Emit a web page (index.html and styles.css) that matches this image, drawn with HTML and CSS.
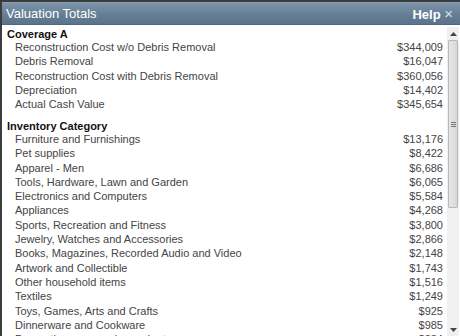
FILE: index.html
```html
<!DOCTYPE html>
<html>
<head>
<meta charset="utf-8">
<link rel="stylesheet" href="styles.css">
</head>
<body>
<div class="dialog">
  <div class="titlebar">
    <span class="title">Valuation Totals</span>
    <span class="help">Help <span class="close">&#215;</span></span>
  </div>
  <div class="body">
    <div class="content">
      <div class="section">
        <div class="heading">Coverage A</div>
        <div class="row"><span>Reconstruction Cost w/o Debris Removal</span><span>$344,009</span></div>
        <div class="row"><span>Debris Removal</span><span>$16,047</span></div>
        <div class="row"><span>Reconstruction Cost with Debris Removal</span><span>$360,056</span></div>
        <div class="row"><span>Depreciation</span><span>$14,402</span></div>
        <div class="row"><span>Actual Cash Value</span><span>$345,654</span></div>
      </div>
      <div class="section">
        <div class="heading">Inventory Category</div>
        <div class="row"><span>Furniture and Furnishings</span><span>$13,176</span></div>
        <div class="row"><span>Pet supplies</span><span>$8,422</span></div>
        <div class="row"><span>Apparel - Men</span><span>$6,686</span></div>
        <div class="row"><span>Tools, Hardware, Lawn and Garden</span><span>$6,065</span></div>
        <div class="row"><span>Electronics and Computers</span><span>$5,584</span></div>
        <div class="row"><span>Appliances</span><span>$4,268</span></div>
        <div class="row"><span>Sports, Recreation and Fitness</span><span>$3,800</span></div>
        <div class="row"><span>Jewelry, Watches and Accessories</span><span>$2,866</span></div>
        <div class="row"><span>Books, Magazines, Recorded Audio and Video</span><span>$2,148</span></div>
        <div class="row"><span>Artwork and Collectible</span><span>$1,743</span></div>
        <div class="row"><span>Other household items</span><span>$1,516</span></div>
        <div class="row"><span>Textiles</span><span>$1,249</span></div>
        <div class="row"><span>Toys, Games, Arts and Crafts</span><span>$925</span></div>
        <div class="row"><span>Dinnerware and Cookware</span><span>$985</span></div>
        <div class="row"><span>Decorative accessories and art</span><span>$884</span></div>
      </div>
    </div>
    <div class="scrollbar">
      <div class="arrow up"><svg width="7" height="4" viewBox="0 0 7 4"><path d="M0 4 L3.5 0 L7 4 Z" fill="#444"/></svg></div>
      <div class="track">
        <div class="thumb"><div class="grip"><i></i><i></i><i></i></div></div>
      </div>
      <div class="arrow down"><svg width="7" height="4" viewBox="0 0 7 4"><path d="M0 0 L3.5 4 L7 0 Z" fill="#444"/></svg></div>
    </div>
  </div>
</div>
</body>
</html>
```
FILE: styles.css
```css
html, body {
  margin: 0;
  padding: 0;
  background: #fff;
}
.dialog {
  width: 460px;
  height: 336px;
  box-sizing: border-box;
  border-top: 2px solid #3c3c3c;
  border-left: 2px solid #3c3c3c;
  background: #fff;
  display: flex;
  flex-direction: column;
  overflow: hidden;
  font-family: "Liberation Sans", Arial, sans-serif;
}
.titlebar {
  height: 21px;
  flex: none;
  display: flex;
  align-items: center;
  justify-content: space-between;
  padding: 0 7px 0 4px;
  background: linear-gradient(#7c93a9, #647d94 60%, #5b748b);
  border-top: 1px solid #8aa0b4;
  border-bottom: 1px solid #50667b;
  color: #fff;
}
.title {
  font-size: 13px;
  margin-top: -1px;
}
.help {
  font-size: 13px;
  font-weight: bold;
  margin-top: -1px;
}
.close {
  font-weight: normal;
  color: #d9e2ea;
  font-size: 15px;
}
.body {
  flex: 1;
  display: flex;
  min-height: 0;
}
.content {
  flex: 1;
  padding: 3px 4px 0 5px;
  color: #444;
  font-size: 11px;
  line-height: 14.3px;
  overflow: hidden;
}
.section {
  margin-bottom: 8.5px;
}
.heading {
  font-weight: bold;
  color: #111;
  line-height: 12px;
}
.row {
  display: flex;
  justify-content: space-between;
  padding-left: 8px;
}
.scrollbar {
  width: 12px;
  flex: none;
  margin: 2px 1px 0 0;
  background: #f0f0f0;
  display: flex;
  flex-direction: column;
}
.arrow {
  height: 13px;
  display: flex;
  align-items: center;
  justify-content: center;
  flex: none;
}
.track {
  flex: 1;
  padding: 0 1px;
}
.thumb {
  height: 168px;
  background: linear-gradient(90deg, #e6e6e6, #d8d8d8);
  border: 1px solid #b8b8b8;
  box-sizing: border-box;
  border-radius: 1px;
  display: flex;
  align-items: center;
  justify-content: center;
}
.grip {
  display: flex;
  flex-direction: column;
  gap: 1px;
}
.grip i {
  display: block;
  width: 5px;
  height: 1px;
  background: #777;
}
```
